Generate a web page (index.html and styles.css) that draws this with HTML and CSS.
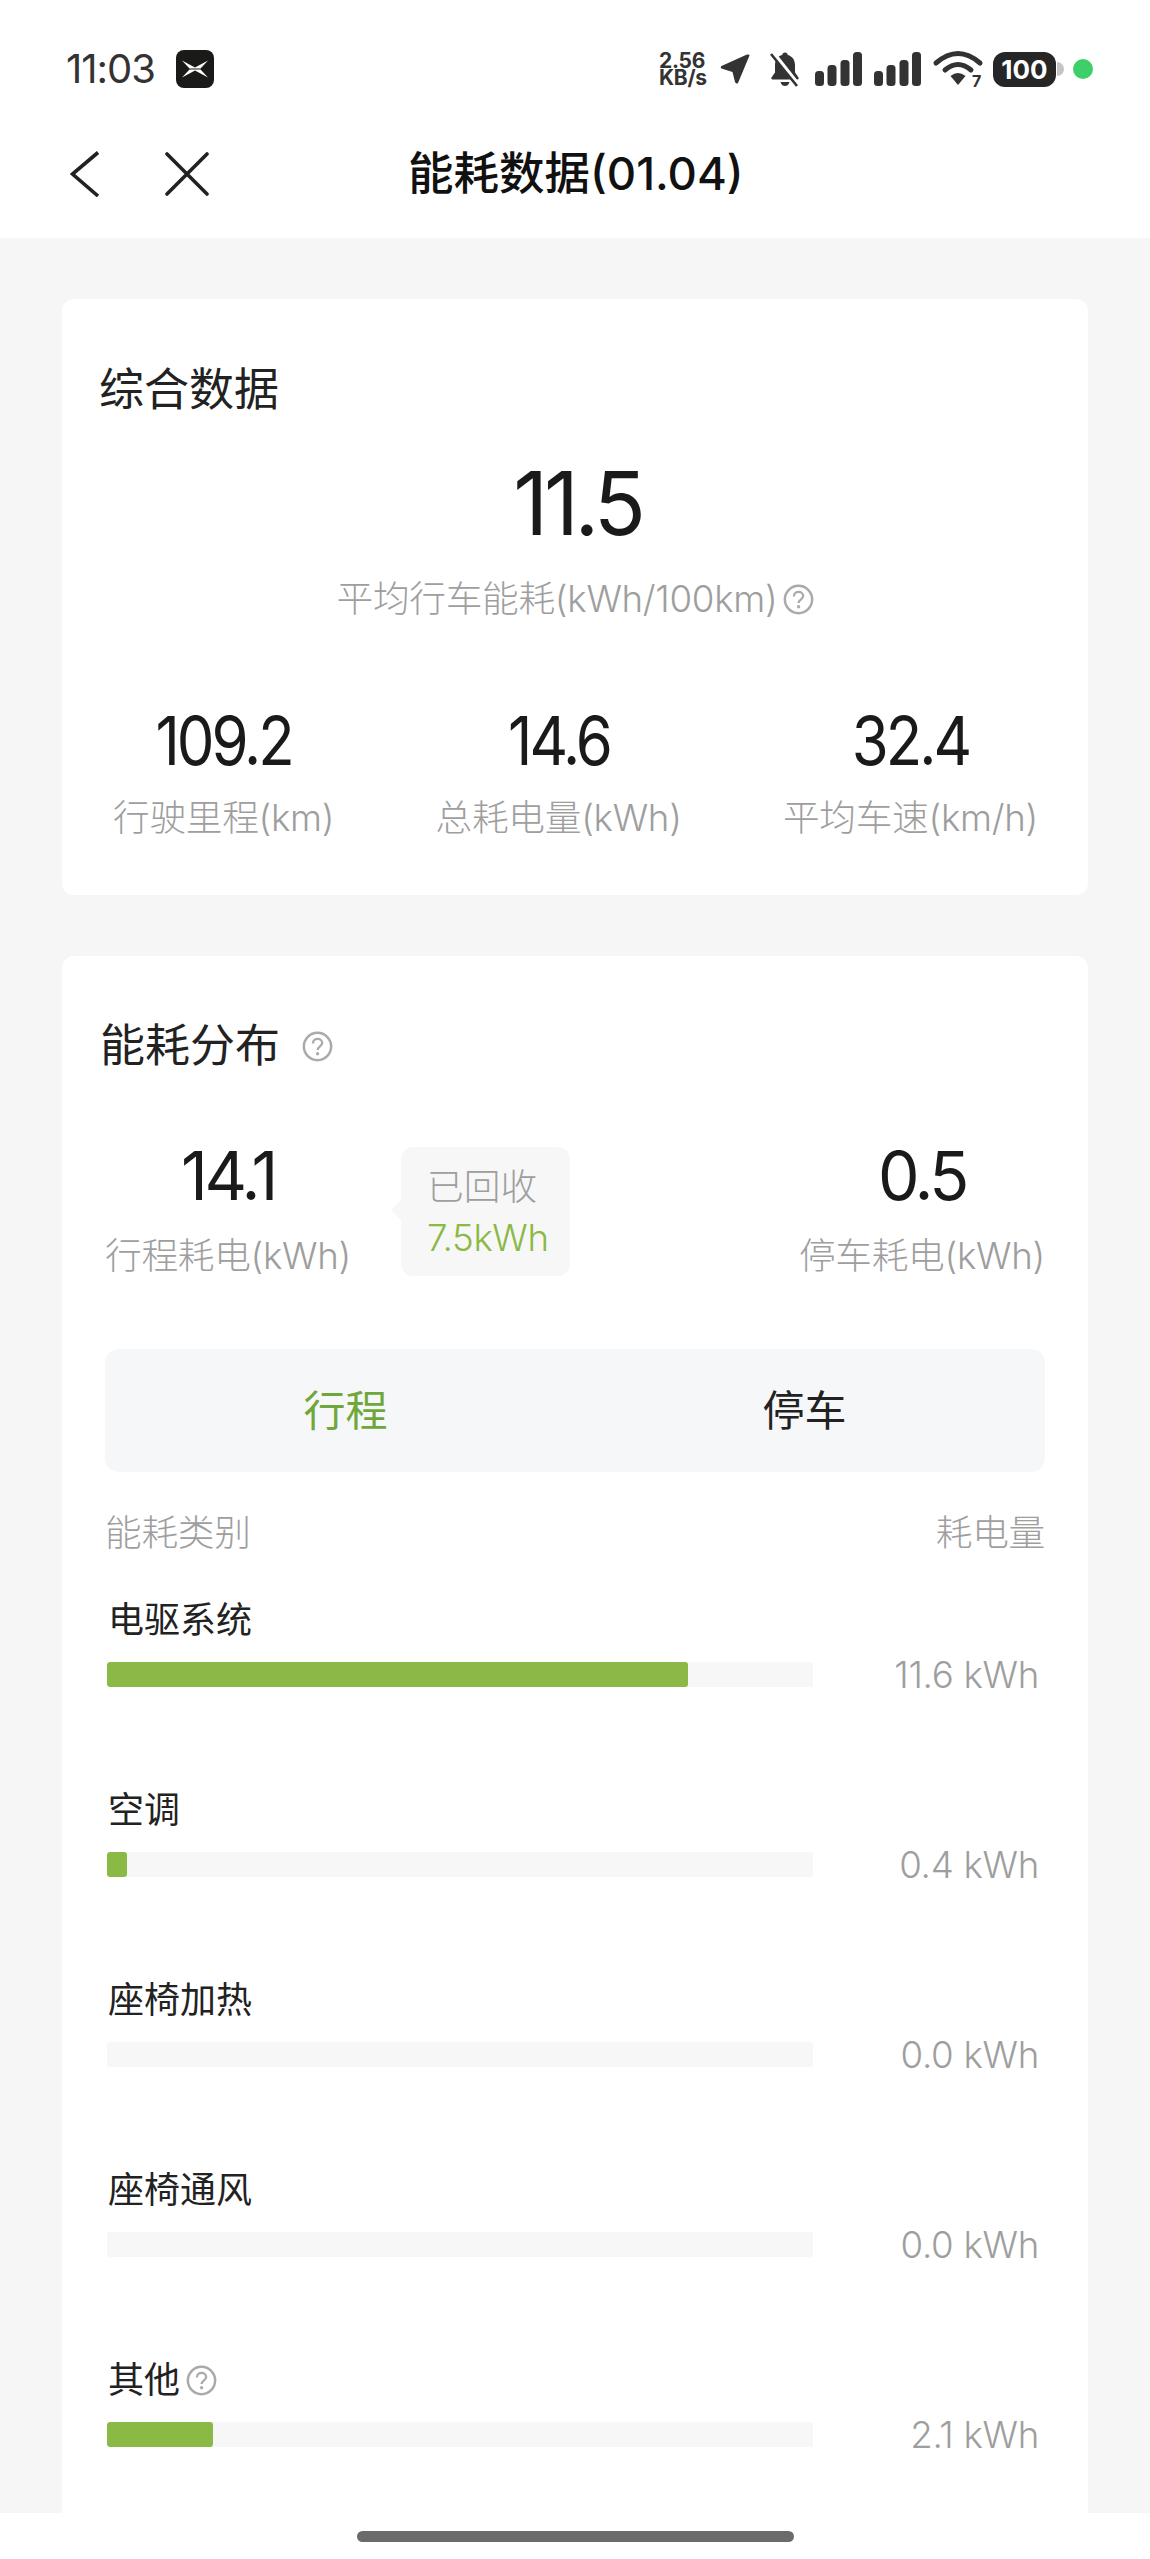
FILE: index.html
```html
<!DOCTYPE html>
<html lang="zh-CN">
<head>
  <meta charset="UTF-8" />
  <title>能耗数据</title>
  <link rel="stylesheet" href="styles.css">
</head>
<body>

  <svg class="defs" width="0" height="0">
    <symbol id="help" viewBox="0 0 30 30">
      <circle cx="15" cy="15" r="13.2" fill="none" stroke="currentColor" stroke-width="2.4" />
      <path d="M10.6 12c0-2.7 2-4.3 4.5-4.3s4.4 1.5 4.4 3.8c0 3.5-4.4 3.6-4.4 6.8" fill="none" stroke="currentColor" stroke-width="2.2" />
      <circle cx="15.1" cy="22" r="1.6" fill="currentColor" />
    </symbol>
    <symbol id="signal" viewBox="0 0 47 34">
      <rect x="0" y="19" width="9" height="15" rx="3.5" />
      <rect x="12.500" y="13" width="9" height="21" rx="3.5" />
      <rect x="25.500" y="8" width="9" height="26" rx="3.5" />
      <rect x="38" y="0" width="9" height="34" rx="3.5" />
    </symbol>
  </svg>

  <div class="header">
    <div class="status-bar">
      <span class="time">11:03</span>
      <svg class="app-logo" viewBox="0 0 38 38">
        <rect width="38" height="38" rx="8" fill="#1a1a18" />
        <path d="M6 10.500 L19 17.600 L32 10.500 L24.500 18.400 H13.500 Z" fill="#fff" />
        <path d="M6 27.500 L19 20.400 L32 27.500 L24.500 19.600 H13.500 Z" fill="#fff" />
      </svg>
      <div class="status-icons">
        <div class="speed">2.56 KB/s</div>
        <svg class="ic-arrow" viewBox="0 0 30 30"><path d="M29.500 1.500 L18 29 Q16.500 30.500 15 28 L12.500 18 L1.500 14.500 Q0 13 1.500 12 L27 .5 Q29.500 0 29.500 1.500Z" /></svg>
        <svg class="ic-bell" viewBox="0 0 32 36">
          <path d="M16 1.500c1.600 0 2.600 1 2.800 2.600 4.600 1.300 7.200 5 7.200 10v7.500l3.500 5c.5 1 0 1.900-1 1.900H3.500c-1 0-1.500-.9-1-1.900l3.500-5V14.100c0-5 2.600-8.800 7.200-10 .2-1.600 1.200-2.600 2.800-2.600z" />
          <path d="M11.500 31h9c-.6 2.600-2.400 4-4.500 4s-3.900-1.400-4.500-4z" />
          <path d="M3 1 L29 34" stroke="#fff" stroke-width="5" fill="none" />
          <path d="M2 3 L28 35" stroke="#333" stroke-width="2.600" fill="none" />
        </svg>
        <svg class="ic-signal"><use href="#signal" /></svg>
        <svg class="ic-signal second"><use href="#signal" /></svg>
        <svg class="ic-wifi" viewBox="0 0 46 36">
          <path d="M1 12 Q23 -7 45 12" fill="none" stroke="#333" stroke-width="5" stroke-linecap="round" />
          <path d="M10 19 Q23 8 36 19" fill="none" stroke="#333" stroke-width="5" stroke-linecap="round" />
          <path d="M15.500 25 Q23 19 30.500 25 L23 34 Z" fill="#333" />
          <text x="37" y="36" class="wifi-num">7</text>
        </svg>
        <div class="battery"><span class="battery-level">100</span><span class="battery-nub"></span></div>
        <span class="green-dot"></span>
      </div>
    </div>
    <div class="nav">
      <svg class="ic-back" viewBox="0 0 30 46"><path d="M28 1.500 L2.500 23 L28 45" fill="none" stroke="#222" stroke-width="3.600" /></svg>
      <svg class="ic-close" viewBox="0 0 44 44"><path d="M2 2 L42 42 M42 2 L2 42" fill="none" stroke="#222" stroke-width="3.600" stroke-linecap="round" /></svg>
      <div class="nav-title">能耗数据(01.04)</div>
    </div>
  </div>

  <div class="main">
    <div class="card card-overall">
      <div class="card-title">综合数据</div>
      <div class="big-value num">11.5</div>
      <div class="big-label label">平均行车能耗(kWh/100km)<svg class="help"><use href="#help" /></svg></div>
      <div class="stats">
        <div class="stat"><div class="stat-value num">109.2</div><div class="label">行驶里程(km)</div></div>
        <div class="stat"><div class="stat-value num">14.6</div><div class="label">总耗电量(kWh)</div></div>
        <div class="stat"><div class="stat-value num">32.4</div><div class="label">平均车速(km/h)</div></div>
      </div>
    </div>

    <div class="card card-dist">
      <div class="card-title">能耗分布<svg class="help title-help"><use href="#help" /></svg></div>
      <div class="summary">
        <div class="stat"><div class="stat-value num">14.1</div><div class="label label-gap">行程耗电(kWh)</div></div>
        <div class="recycled">
          <div class="recycled-label">已回收</div>
          <div class="recycled-value">7.5kWh</div>
        </div>
        <div class="stat stat-right"><div class="stat-value num">0.5</div><div class="label label-gap">停车耗电(kWh)</div></div>
      </div>

      <div class="tabs">
        <div class="tab active">行程</div>
        <div class="tab">停车</div>
      </div>

      <div class="list-head label"><span>能耗类别</span><span>耗电量</span></div>

      <div class="row">
        <div class="row-name">电驱系统</div>
        <div class="row-line">
          <div class="bar"><div class="fill" style="width: 581px"></div></div>
          <div class="row-value">11.6 kWh</div>
        </div>
      </div>
      <div class="row">
        <div class="row-name">空调</div>
        <div class="row-line">
          <div class="bar"><div class="fill" style="width: 20px"></div></div>
          <div class="row-value">0.4 kWh</div>
        </div>
      </div>
      <div class="row">
        <div class="row-name">座椅加热</div>
        <div class="row-line">
          <div class="bar"></div>
          <div class="row-value">0.0 kWh</div>
        </div>
      </div>
      <div class="row">
        <div class="row-name">座椅通风</div>
        <div class="row-line">
          <div class="bar"></div>
          <div class="row-value">0.0 kWh</div>
        </div>
      </div>
      <div class="row">
        <div class="row-name">其他<svg class="help"><use href="#help" /></svg></div>
        <div class="row-line">
          <div class="bar"><div class="fill" style="width: 106px"></div></div>
          <div class="row-value">2.1 kWh</div>
        </div>
      </div>
    </div>
  </div>

  <div class="home-bar"><span class="home-handle"></span></div>

</body>
</html>
```
FILE: styles.css
```css
* {
  box-sizing: border-box;
}
body {
  margin: 0;
  height: 2559px;
  display: flex;
  flex-direction: column;
  overflow: hidden;
  background: #f6f6f6;
  color: #222;
  font-family: Inter, "Noto Sans CJK SC", sans-serif;
}
.defs {
  position: absolute;
}

/* status bar + nav */
.header {
  height: 238px;
  flex-shrink: 0;
  padding-top: 50px;
  background: #fff;
}
.status-bar {
  display: flex;
  align-items: center;
  height: 38px;
  padding-left: 66px;
}
.time {
  width: 110px;
  font-size: 40px;
  line-height: 38px;
  color: #333;
  letter-spacing: -1px;
}
.app-logo {
  width: 38px;
  height: 38px;
}
.status-icons {
  margin-left: auto;
  display: flex;
  align-items: center;
  padding-right: 57px;
  color: #333;
  fill: #333;
}
.speed {
  width: 50px;
  margin-right: 11px;
  font-size: 21px;
  font-weight: 700;
  line-height: 17px;
  letter-spacing: -0.3px;
}
.ic-arrow {
  width: 30px;
  height: 30px;
  margin-right: 19px;
}
.ic-bell {
  width: 32px;
  height: 36px;
  margin-right: 14px;
}
.ic-signal {
  width: 47px;
  height: 34px;
  margin-right: 12px;
}
.ic-signal.second {
  margin-right: 14px;
}
.ic-wifi {
  width: 46px;
  height: 36px;
  margin-right: 12px;
  overflow: visible;
}
.wifi-num {
  font-size: 16px;
  font-weight: 700;
  fill: #333;
}
.battery {
  display: flex;
  align-items: center;
}
.battery-level {
  width: 63px;
  height: 35px;
  border-radius: 12px;
  background: #262626;
  color: #fff;
  font-size: 26px;
  font-weight: 700;
  line-height: 35px;
  text-align: center;
}
.battery-nub {
  width: 7px;
  height: 14px;
  border-radius: 0 7px 7px 0;
  background: #c4c4c4;
  margin-left: 1px;
}
.green-dot {
  width: 20px;
  height: 20px;
  border-radius: 50%;
  background: #3ccf6a;
  margin-left: 9px;
}
.nav {
  display: flex;
  align-items: center;
  height: 60px;
  margin-top: 56px;
  padding-left: 70px;
}
.ic-back {
  width: 30px;
  height: 46px;
}
.ic-close {
  width: 44px;
  height: 44px;
  margin-left: 65px;
}
.nav-title {
  margin-left: 199px;
  font-size: 45.5px;
  font-weight: 500;
  line-height: 60px;
  color: #111;
  white-space: nowrap;
}

/* cards */
.main {
  flex: 1;
  overflow: hidden;
  padding: 61px 62px 0;
}
.card {
  background: #fff;
  border-radius: 12px;
}
.card-overall {
  padding: 61px 50px 53px 51px;
  margin-bottom: 61px;
}
.card-dist {
  padding: 60px 43px 100px;
}
.card-title {
  display: flex;
  align-items: center;
  font-size: 45px;
  line-height: 60px;
  color: #222;
}
.card-overall .card-title {
  margin-left: -14px;
}
.card-dist .card-title {
  margin-left: -5px;
}
.num {
  color: #1a1a1a;
  letter-spacing: -0.05em;
}
.label {
  font-size: 36.7px;
  line-height: 48px;
  color: #9e9e9e;
  font-weight: 300;
  letter-spacing: -0.3px;
  white-space: nowrap;
}
.help {
  width: 31px;
  height: 31px;
  color: #aaa;
  flex-shrink: 0;
}
.title-help {
  margin-left: 22px;
}
.big-value {
  margin-top: 33px;
  margin-left: 4px;
  font-size: 88px;
  line-height: 100px;
  text-align: center;
  transform: scaleX(0.975);
}
.big-label {
  display: flex;
  align-items: center;
  justify-content: center;
  margin-top: 22px;
}
.big-label .help {
  margin-left: 6px;
}
.stats {
  display: flex;
  justify-content: space-between;
  margin-top: 79px;
}
.stat {
  text-align: center;
}
.stat-value {
  font-size: 68px;
  line-height: 76px;
  transform: scaleX(0.88);
}
.stat .label {
  margin-top: 16px;
}
.stat .label-gap {
  margin-top: 19px;
}

/* energy split */
.summary {
  display: flex;
  align-items: flex-start;
  margin-top: 61px;
}
.summary .stat-value {
  transform: scaleX(0.97);
}
.recycled {
  position: relative;
  width: 169px;
  height: 129px;
  margin-top: 10px;
  margin-left: 50px;
  padding: 16px 0 0 26px;
  border-radius: 12px;
  background: #f7f7f7;
  font-size: 36.7px;
  font-weight: 300;
}
.recycled::before {
  content: "";
  position: absolute;
  left: -7px;
  top: 56px;
  width: 14px;
  height: 14px;
  background: #f7f7f7;
  transform: rotate(45deg);
}
.recycled-label {
  position: relative;
  line-height: 48px;
  color: #9e9e9e;
}
.recycled-value {
  position: relative;
  line-height: 54px;
  color: #8ab945;
  letter-spacing: -0.4px;
}
.stat-right {
  margin-left: auto;
}
.tabs {
  display: flex;
  height: 123px;
  margin-top: 69px;
  padding: 0 11px;
  border-radius: 14px;
  background: #f6f7f8;
}
.tab {
  flex: 1;
  font-size: 42px;
  line-height: 123px;
  text-align: center;
  color: #222;
}
.tab.active {
  color: #6fa73a;
}
.list-head {
  display: flex;
  justify-content: space-between;
  margin-top: 37px;
  margin-bottom: 39px;
}
.row {
  margin-bottom: 82px;
  padding-left: 2px;
}
.row-name {
  display: flex;
  align-items: center;
  padding-left: 1px;
  font-size: 36px;
  line-height: 48px;
  color: #222;
}
.row-name .help {
  margin-left: 6px;
}
.row-line {
  display: flex;
  align-items: center;
  height: 60px;
  padding-right: 6px;
}
.bar {
  width: 706px;
  height: 25px;
  border-radius: 2px;
  background: #f7f7f7;
  overflow: hidden;
}
.fill {
  height: 100%;
  border-radius: 3px;
  background: #8ab945;
}
.row-value {
  flex: 1;
  text-align: right;
  font-size: 36.7px;
  font-weight: 300;
  color: #9e9e9e;
  letter-spacing: -0.3px;
  white-space: nowrap;
}

/* gesture bar */
.home-bar {
  display: flex;
  justify-content: center;
  height: 46px;
  flex-shrink: 0;
  padding-top: 18px;
  background: #fff;
}
.home-handle {
  width: 437px;
  height: 11px;
  border-radius: 6px;
  background: #6b6b6b;
}
```
